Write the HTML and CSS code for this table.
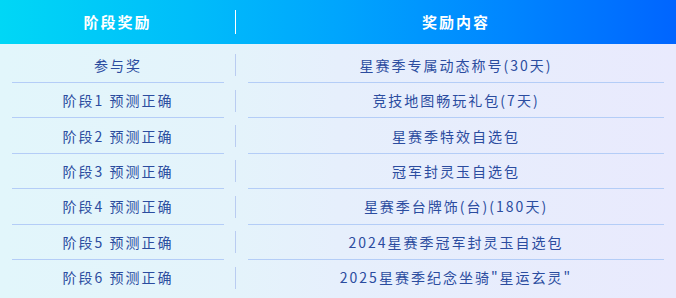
FILE: index.html
```html
<!DOCTYPE html>
<html lang="zh-CN">
<head>
<meta charset="utf-8">
<title>阶段奖励</title>
<link rel="stylesheet" href="styles.css">
</head>
<body>
<div class="board">
  <div class="head">
    <div class="hcell">阶段奖励</div>
    <div class="hdiv"></div>
    <div class="hcell">奖励内容</div>
  </div>
  <div class="rows">
    <div class="row"><div class="cell left">参与奖</div><div class="vdiv"></div><div class="cell right">星赛季专属动态称号(30天)</div></div>
    <div class="row"><div class="cell left">阶段1 预测正确</div><div class="vdiv"></div><div class="cell right">竞技地图畅玩礼包(7天)</div></div>
    <div class="row"><div class="cell left">阶段2 预测正确</div><div class="vdiv"></div><div class="cell right">星赛季特效自选包</div></div>
    <div class="row"><div class="cell left">阶段3 预测正确</div><div class="vdiv"></div><div class="cell right">冠军封灵玉自选包</div></div>
    <div class="row"><div class="cell left">阶段4 预测正确</div><div class="vdiv"></div><div class="cell right">星赛季台牌饰(台)(180天)</div></div>
    <div class="row"><div class="cell left">阶段5 预测正确</div><div class="vdiv"></div><div class="cell right">2024星赛季冠军封灵玉自选包</div></div>
    <div class="row last"><div class="cell left">阶段6 预测正确</div><div class="vdiv"></div><div class="cell right">2025星赛季纪念坐骑"星运玄灵"</div></div>
  </div>
</div>
</body>
</html>
```
FILE: styles.css
```css
html, body {
  margin: 0;
  padding: 0;
}
body {
  width: 676px;
  height: 298px;
  overflow: hidden;
  font-family: "Noto Sans CJK SC", "Noto Sans", sans-serif;
  background: linear-gradient(90deg, #e2f6fb 0%, #e4f3fb 35%, #e6effc 50%, #e9eafd 100%);
}
.board {
  width: 676px;
  height: 298px;
}
.head {
  height: 44px;
  display: grid;
  grid-template-columns: 235px 1px 1fr;
  align-items: center;
  background: linear-gradient(90deg, #00d7f6 0%, #00bdfa 28%, #00a5fd 50%, #0086ff 75%, #0065ff 100%);
}
.hcell {
  color: #ffffff;
  font-size: 15px;
  font-weight: bold;
  letter-spacing: 2px;
  text-align: center;
  line-height: 44px;
}
.hdiv {
  width: 1px;
  height: 24px;
  background: #ffffff;
}
.rows {
  padding-top: 3.6px;
}
.row {
  height: 35.4px;
  display: grid;
  grid-template-columns: 235px 1px 1fr;
  align-items: stretch;
}
.cell {
  display: flex;
  align-items: center;
  justify-content: center;
  font-size: 14px;
  letter-spacing: 2px;
  color: #2b4c9f;
  border-bottom: 1px solid #b4cdf7;
  white-space: nowrap;
}
.left {
  margin: 0 11px 0 12px;
}
.right {
  margin: 0 12px 0 12px;
}
.row.last .cell {
  border-bottom-color: transparent;
}
.vdiv {
  align-self: center;
  width: 1px;
  height: 22px;
  background: #b9ccf1;
}
```
